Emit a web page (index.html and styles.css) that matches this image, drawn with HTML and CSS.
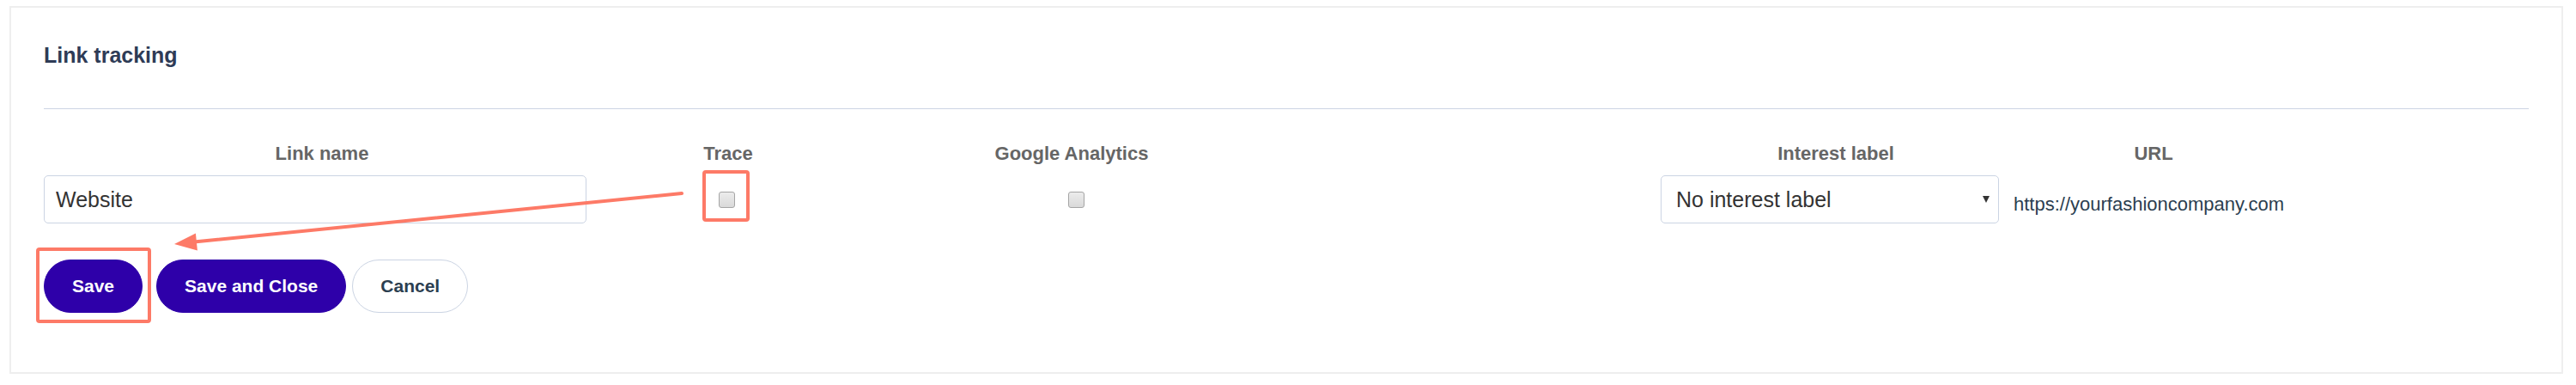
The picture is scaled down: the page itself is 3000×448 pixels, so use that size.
FILE: index.html
```html
<!DOCTYPE html>
<html lang="en">
<head>
<meta charset="utf-8">
<title>Link tracking</title>
<link rel="stylesheet" href="styles.css">
</head>
<body>
  <div class="card">
    <h2 class="title">Link tracking</h2>
    <hr class="divider">
    <div class="links">
      <div class="th">Link name</div>
      <div class="th">Trace</div>
      <div class="th">Google Analytics</div>
      <div class="th"></div>
      <div class="th">Interest label</div>
      <div class="th">URL</div>
      <div class="th"></div>

      <div class="td"><input class="text-input" type="text" value="Website"></div>
      <div class="td td-center td-trace"><input class="check" type="checkbox"></div>
      <div class="td td-center td-ga"><input class="check" type="checkbox"></div>
      <div class="td"></div>
      <div class="td"><div class="select"><span>No interest label</span><span class="caret"></span></div></div>
      <div class="td td-url">https://yourfashioncompany.com</div>
      <div class="td"></div>
    </div>
    <div class="actions">
      <button class="btn btn-primary btn-save">Save</button>
      <button class="btn btn-primary">Save and Close</button>
      <button class="btn btn-outline">Cancel</button>
    </div>
  </div>

  <svg class="annotations" width="3000" height="448" viewBox="0 0 3000 448">
    <rect x="820" y="200" width="51" height="56" rx="2" fill="none" stroke="#fd7a67" stroke-width="4"/>
    <rect x="44" y="290" width="130" height="84" rx="2" fill="none" stroke="#fd7a67" stroke-width="4"/>
    <line x1="794" y1="225" x2="226" y2="281.6" stroke="#fd7a67" stroke-width="4" stroke-linecap="round"/>
    <polygon points="203,284 227.9,271.5 229.9,291.4" fill="#fd7a67"/>
  </svg>
</body>
</html>
```

FILE: styles.css
```css
html, body {
  margin: 0;
  padding: 0;
  background: #ffffff;
}

body {
  position: relative;
  width: 3000px;
  height: 448px;
  overflow: hidden;
  font-family: "Liberation Sans", Arial, sans-serif;
}

.card {
  margin: 7px 15px 0 11px;
  border: 2px solid #eeeeee;
  background: #ffffff;
  padding: 40px 38px 69px 38px;
}

.title {
  margin: 0;
  font-size: 25px;
  line-height: 30px;
  font-weight: bold;
  color: #2e3b56;
}

.divider {
  margin: 47px 0 0 0;
  border: none;
  height: 1px;
  background: #cdd5e4;
}

.links {
  margin-top: 39px;
  display: grid;
  grid-template-columns: 648px 298px 502px 435px 408px 332px 1fr;
  grid-template-rows: 26px 56px;
  row-gap: 12px;
}

.th {
  font-size: 22px;
  line-height: 26px;
  font-weight: bold;
  color: #666666;
  text-align: center;
  white-space: nowrap;
}

.td {
  display: flex;
  align-items: center;
}

.td-center {
  justify-content: center;
}

.td-trace {
  padding-right: 3px;
}

.td-ga {
  padding-left: 10px;
}

.text-input {
  box-sizing: border-box;
  width: 632px;
  height: 56px;
  margin: 0;
  padding: 0 0 0 13px;
  border: 1px solid #cbd4e3;
  border-radius: 5px;
  font-family: "Liberation Sans", Arial, sans-serif;
  font-size: 25px;
  color: #333333;
  background: #ffffff;
  outline: none;
}

.check {
  -webkit-appearance: none;
  appearance: none;
  box-sizing: border-box;
  width: 19px;
  height: 19px;
  margin: 0;
  border: 1px solid #a5a5a5;
  border-radius: 3px;
  background: linear-gradient(#ececec, #d9d9d9);
}

.select {
  box-sizing: border-box;
  width: 394px;
  height: 56px;
  display: flex;
  align-items: center;
  justify-content: space-between;
  padding: 0 10px 0 17px;
  border: 1px solid #cbd4e3;
  border-radius: 5px;
  font-size: 25px;
  color: #333333;
  background: #ffffff;
}

.caret {
  width: 0;
  height: 0;
  border-left: 4px solid transparent;
  border-right: 4px solid transparent;
  border-top: 8px solid #333333;
}

.td-url {
  padding: 11px 0 0 3px;
  font-size: 22px;
  color: #2c3e50;
  white-space: nowrap;
}

.actions {
  margin-top: 42px;
  display: flex;
  align-items: center;
  gap: 7px;
}

.btn {
  box-sizing: border-box;
  height: 62px;
  padding: 0 32px;
  border-radius: 31px;
  font-family: "Liberation Sans", Arial, sans-serif;
  font-size: 21px;
  font-weight: bold;
  cursor: pointer;
}

.btn-primary {
  background: #2e00a9;
  border: 1px solid #2e00a9;
  color: #ffffff;
}

.btn-save {
  margin-right: 9px;
}

.btn-outline {
  background: #ffffff;
  border: 1px solid #cbd4e3;
  color: #2c3e50;
}

.annotations {
  position: absolute;
  left: 0;
  top: 0;
  pointer-events: none;
}
```
